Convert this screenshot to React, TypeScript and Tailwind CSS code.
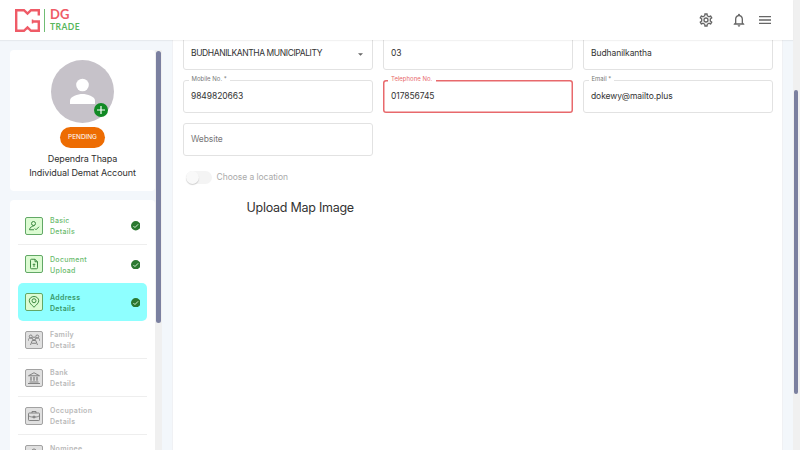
import React from "react";
import type { ReactNode } from "react";

type FieldProps = {
  label?: string;
  value?: string;
  tracking?: string;
  error?: boolean;
  select?: boolean;
  placeholder?: string;
};

function Field({ label, value, tracking = "tracking-[-0.08px]", error, select, placeholder }: FieldProps) {
  return (
    <div
      className={`relative flex h-[33px] items-center rounded-[3px] text-[8.5px] ${
        error ? "px-[8.500px] shadow-[inset_0_0_0_1.5px_#e8696c]" : "border border-[#e2e2e2] px-[7.500px]"
      }`}
    >
      {label && (
        <span
          className={`absolute bg-white px-[3px] text-[6px] leading-[10px] ${
            error ? "-top-[6px] left-[5.500px] pr-[4px] text-[#e8696c]" : "-top-[7px] left-[5px] text-[#777]"
          }`}
        >
          {label}
        </span>
      )}
      <span className={`flex-1 whitespace-nowrap ${placeholder ? "text-[#777]" : "text-[#333]"} ${tracking}`}>
        {value ?? placeholder}
      </span>
      {select && (
        <svg className="mr-[1px] mt-[1px] h-[3px] w-[5px]" viewBox="0 0 10 5" fill="#666">
          <path d="M0 0h10L5 5z" />
        </svg>
      )}
    </div>
  );
}

function StepIcon({ name }: { name: string }) {
  const shapes: Record<string, ReactNode> = {
    basic: (
      <>
        <circle cx="11" cy="7" r="4" />
        <path d="M13 11C8 13 3 14.500 3 19.500H12M13.500 17l2.500 2.500 6-6" />
      </>
    ),
    document: (
      <>
        <path d="M14 2.500H7a2 2 0 0 0-2 2v15a2 2 0 0 0 2 2h10a2 2 0 0 0 2-2v-12zM14 2.500v5h5" />
        <path d="M12 18v-6M9.500 14 12 11.500l2.500 2.500" />
      </>
    ),
    address: (
      <>
        <path d="M12 22.500C7 17.500 2.500 14 2.500 9.500a9.500 8.500 0 0 1 19 0C21.500 14 17 17.500 12 22.500z" />
        <circle cx="12" cy="9.500" r="4" />
      </>
    ),
    family: (
      <>
        <circle cx="5.500" cy="5" r="3" />
        <circle cx="18.500" cy="5" r="3" />
        <circle cx="12" cy="9" r="3" />
        <path d="M0 14c0-4 2-6 5-6 2 0 3 1 4 2M24 14c0-4-2-6-5-6-2 0-3 1-4 2M5 22l3.500-9h7L19 22M8 18.500h8" />
      </>
    ),
    bank: (
      <>
        <path d="M1 7.500h22L12 1.500zM0 23h24M3 20h18" />
        <path d="M6 9.500v8M12 9.500v8M18 9.500v8" strokeWidth="2.500" />
      </>
    ),
    occupation: (
      <>
        <rect x="1" y="6" width="22" height="15" rx="1.500" />
        <path d="M8 6V3h8v3M1 11.500c3 2 6 2.500 8 2.500h6c2 0 5-.5 8-2.500M10 12.500h4v3h-4z" />
      </>
    ),
    nominee: (
      <>
        <circle cx="12" cy="6" r="4" />
        <path d="M4 21c0-5 3-8 8-8s8 3 8 8" />
      </>
    ),
  };
  return (
    <svg className="size-[12px] shrink-0" viewBox="0 0 24 24" fill="none" stroke="currentColor" strokeWidth="1.900">
      {shapes[name]}
    </svg>
  );
}

type Step = { icon: string; title: string; sub: string; state: "done" | "active" | "todo" };

const steps: Step[] = [
  { icon: "basic", title: "Basic", sub: "Details", state: "done" },
  { icon: "document", title: "Document", sub: "Upload", state: "done" },
  { icon: "address", title: "Address", sub: "Details", state: "active" },
  { icon: "family", title: "Family", sub: "Details", state: "todo" },
  { icon: "bank", title: "Bank", sub: "Details", state: "todo" },
  { icon: "occupation", title: "Occupation", sub: "Details", state: "todo" },
  { icon: "nominee", title: "Nominee", sub: "Details", state: "todo" },
];

const textStyles = {
  done: "font-medium text-[#6abb6e]",
  active: "font-semibold text-[#37996a]",
  todo: "font-semibold text-[#b9b9b9]",
};

function StepRow({ step }: { step: Step }) {
  const todo = step.state === "todo";
  const active = step.state === "active";
  return (
    <div
      className={`flex h-[38px] shrink-0 items-center pl-[7px] pr-[7px] ${
        active ? "rounded-[5px] bg-[#8effff]" : step.title === "Document" ? "" : "border-b border-[#eee]"
      }`}
    >
      <div
        className={`flex size-[18px] items-center justify-center rounded-[2px] border ${
          todo ? "border-[#a2a2a2] bg-[#e0e0e0] text-[#7d7d7d]" : "border-[#62a866] bg-[#dcfbd2] text-[#37853b]"
        }`}
      >
        <StepIcon name={step.icon} />
      </div>
      <div className={`ml-[7px] flex-1 pt-[1px] text-[7px] leading-[11.3px] tracking-[0.31px] ${textStyles[step.state]}`}>
        <div>{step.title}</div>
        <div>{step.sub}</div>
      </div>
      {!todo && (
        <svg className="size-[9.500px]" viewBox="0 0 20 20">
          <circle cx="10" cy="10" r="10" fill="#2b7830" />
          <path d="m5 10.500 3.300 3.300L15 7" fill="none" stroke="#d8f5d8" strokeWidth="2" />
        </svg>
      )}
    </div>
  );
}

function Header() {
  return (
    <header className="z-10 flex h-10 shrink-0 items-center bg-white pl-[15px] pr-[20px] shadow-[0_1px_1px_rgba(0,0,0,0.05)]">
      <svg className="h-[23px] w-[25px]" viewBox="0 0 25 23" fill="none" stroke="#ef5b67" strokeWidth="2.400">
        <path d="M23.800 6.500V1.200H16L12.500 4.500 9 1.200H1.200v20.600H9l3.500-3.300 3.500 3.300h7.800V12.500H18" />
        <path d="M17.500 10.500v4" strokeWidth="1.500" />
      </svg>
      <div className="ml-[4px] h-[23px] w-px bg-[#70bd74]" />
      <div className="ml-[5px] flex flex-col gap-[1px] font-['Lato',sans-serif] font-bold">
        <div className="text-[13px] leading-[13px] text-[#ef5b67]">DG</div>
        <div className="text-[8.500px] leading-[10px] tracking-[0.45px] text-[#58b65c]">TRADE</div>
      </div>
      <div className="ml-auto flex items-center text-[#666]">
        <svg className="size-[16px]" viewBox="0 0 24 24" fill="currentColor">
          <path d="M19.430 12.980c.04-.32.07-.64.07-.98s-.03-.66-.07-.98l2.110-1.650c.19-.15.24-.42.12-.64l-2-3.460a.5.5 0 0 0-.61-.22l-2.490 1c-.52-.4-1.080-.73-1.690-.98l-.38-2.650A.488.488 0 0 0 14 2h-4c-.25 0-.46.18-.49.42l-.38 2.650c-.61.25-1.170.59-1.690.98l-2.490-1a.5.5 0 0 0-.61.22l-2 3.460c-.13.22-.07.49.12.64l2.110 1.650c-.04.32-.07.65-.07.98s.03.66.07.98l-2.110 1.650c-.19.15-.24.42-.12.64l2 3.460c.12.22.39.3.61.22l2.490-1c.52.4 1.080.73 1.690.98l.38 2.650c.03.24.24.42.49.42h4c.25 0 .46-.18.49-.42l.38-2.650c.61-.25 1.170-.59 1.690-.98l2.490 1c.23.09.49 0 .61-.22l2-3.460c.12-.22.07-.49-.12-.64zm-1.980-1.710c.04.31.05.52.05.73s-.02.43-.05.73l-.14 1.130.89.7 1.080.84-.7 1.210-1.270-.51-1.040-.42-.9.68c-.43.32-.84.56-1.250.73l-1.060.43-.16 1.130-.2 1.350h-1.400l-.19-1.350-.16-1.130-1.060-.43c-.43-.18-.83-.41-1.230-.71l-.91-.7-1.060.43-1.270.51-.7-1.210 1.080-.84.89-.7-.14-1.130c-.03-.31-.05-.54-.05-.74s.02-.43.05-.73l.14-1.130-.89-.7-1.080-.84.7-1.210 1.270.51 1.040.42.9-.68c.43-.32.84-.56 1.250-.73l1.060-.43.16-1.130.2-1.350h1.390l.19 1.350.16 1.130 1.060.43c.43.18.83.41 1.230.71l.91.7 1.060-.43 1.270-.51.7 1.210-1.070.85-.89.7zM12 8a4 4 0 1 0 0 8 4 4 0 0 0 0-8m0 6a2 2 0 1 1 0-4 2 2 0 0 1 0 4" />
        </svg>
        <svg className="ml-[17px] size-[16px]" viewBox="0 0 24 24" fill="currentColor">
          <path d="M12 22c1.100 0 2-.9 2-2h-4c0 1.100.9 2 2 2m6-6v-5c0-3.070-1.630-5.640-4.500-6.320V4a1.500 1.500 0 0 0-3 0v.68C7.640 5.360 6 7.920 6 11v5l-2 2v1h16v-1zm-2 1H8v-6c0-2.480 1.510-4.500 4-4.500s4 2.020 4 4.500z" />
        </svg>
        <svg className="ml-[10px] size-[16px]" viewBox="0 0 24 24" fill="currentColor">
          <path d="M3 18h18v-2H3zm0-5h18v-2H3zm0-7v2h18V6z" />
        </svg>
      </div>
    </header>
  );
}

function ProfileCard() {
  return (
    <section className="flex h-[141px] shrink-0 flex-col items-center rounded-[4px] bg-white pt-[10px] text-[#303030]">
      <div className="relative size-[63px]">
        <svg className="size-full" viewBox="0 0 63 63">
          <circle cx="31.500" cy="31.500" r="31.500" fill="#c6c2c9" />
          <circle cx="31.500" cy="25" r="6.300" fill="#fff" />
          <path d="M19 44v-3.500c0-4 8-6.500 12.500-6.500S44 36.500 44 40.500V44z" fill="#fff" />
        </svg>
        <svg className="absolute left-[43px] top-[43px] size-[14px]" viewBox="0 0 14 14">
          <circle cx="7" cy="7" r="7" fill="#118a24" />
          <path d="M7 3v8M3 7h8" stroke="#fff" strokeWidth="1.200" />
        </svg>
      </div>
      <div className="mt-[4px] flex h-[21px] w-[45px] items-center justify-center rounded-full bg-[#ed6c02] text-[6.500px] tracking-[-0.05px] text-white">
        PENDING
      </div>
      <div className="mt-[4px] text-[9px] leading-[14px] tracking-[-0.13px]">Dependra Thapa</div>
      <div className="text-[9px] leading-[14px] tracking-[-0.1px]">Individual Demat Account</div>
    </section>
  );
}

export default function App() {
  return (
    <div className="flex h-[450px] w-[800px] overflow-hidden bg-[#f3f7fb] font-['Inter','Open_Sans',sans-serif]">
      <div className="flex min-w-0 flex-1 flex-col">
        <Header />
        <div className="flex min-h-0 flex-1">
          <aside className="flex w-[155px] flex-col gap-[9px] overflow-hidden pl-[10px] pt-[10px]">
            <ProfileCard />
            <nav className="flex flex-col rounded-t-[4px] bg-white px-[8px] pt-[7.400px]">
              {steps.map((step) => (
                <StepRow key={step.title} step={step} />
              ))}
            </nav>
          </aside>
          <div className="mt-[10px] w-[7px] bg-[#f0f0f0] pl-[1px] pt-[1px]">
            <div className="h-[272px] w-[5px] rounded-full bg-[#7b80a0]" />
          </div>
          <main className="ml-[10px] w-[611px] overflow-hidden border-x border-[#f0f1f4] bg-white pl-[9.500px] pr-[9.500px]">
            <div className="-mt-[3px] grid grid-cols-3 gap-x-[10px] gap-y-[10px]">
              <Field value="BUDHANILKANTHA MUNICIPALITY" tracking="tracking-[-0.41px]" select />
              <Field value="03" />
              <Field value="Budhanilkantha" />
              <Field label="Mobile No. *" value="9849820663" />
              <Field label="Telephone No." value="017856745" error />
              <Field label="Email *" value="dokewy@mailto.plus" />
              <Field placeholder="Website" />
            </div>
            <div className="mt-[14px] flex h-[15px] items-center pl-[3.500px]">
              <div className="flex h-[13px] w-[26px] items-center rounded-full bg-[#f4f4f4]">
                <div className="size-[13px] rounded-full bg-[#f9f9f9] shadow-[0_1px_1px_rgba(0,0,0,0.18)]" />
              </div>
              <span className="ml-[4.500px] text-[8.500px] tracking-[-0.05px] text-[#aaa]">Choose a location</span>
            </div>
            <h2 className="mt-[13px] pl-[64px] text-[12.500px] leading-[20px] tracking-[-0.26px] text-[#333]">
              Upload Map Image
            </h2>
          </main>
        </div>
      </div>
      <div className="w-[7px] bg-[#f0f0f0] pl-[1px] pt-[90px]">
        <div className="h-[304px] w-[4px] rounded-full bg-[#7b80a0]" />
      </div>
    </div>
  );
}
